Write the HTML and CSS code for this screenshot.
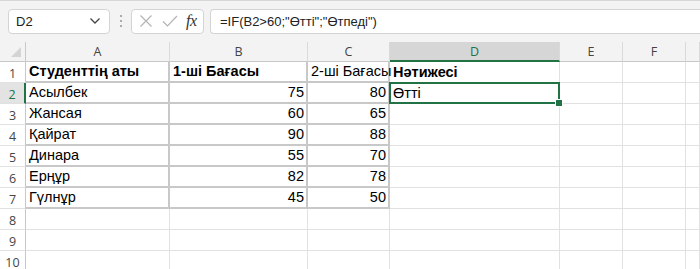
FILE: index.html
```html
<!DOCTYPE html>
<html lang="kk">
<head>
    <meta charset="UTF-8">
    <meta name="viewport" content="width=device-width, initial-scale=1.0">
    <title>Нәтижесі</title>
    <link rel="stylesheet" href="styles.css">
</head>
<body>

<div class="toolbar">
    <div class="namebox">
        <span>D2</span>
        <svg class="chevron" width="12" height="8" viewBox="0 0 12 8"><polyline points="1.5,1.5 6,6 10.5,1.5" fill="none" stroke="#444" stroke-width="1.3"/></svg>
    </div>
    <svg class="dots" width="4" height="14" viewBox="0 0 4 14"><circle cx="2" cy="2" r="1.1" fill="#9a9a9a"/><circle cx="2" cy="7" r="1.1" fill="#9a9a9a"/><circle cx="2" cy="12" r="1.1" fill="#9a9a9a"/></svg>
    <div class="fxbox">
        <svg width="14" height="14" viewBox="0 0 14 14"><path d="M1.5 1.5 L12.5 12.5 M12.5 1.5 L1.5 12.5" stroke="#b4b4b4" stroke-width="1.2" fill="none"/></svg>
        <svg width="16" height="14" viewBox="0 0 16 14"><polyline points="1,7.5 5.5,12 15,2" stroke="#b4b4b4" stroke-width="1.2" fill="none"/></svg>
        <span class="fx">fx</span>
    </div>
    <div class="formula">=IF(B2&gt;60;"Өтті";"Өтпеді")</div>
</div>

<div class="sheet">
    <div class="corner"><svg width="10" height="10" viewBox="0 0 10 10"><polygon points="10,0 10,10 0,10" fill="#d4d4d4"/></svg></div>
    <div class="colhead">A</div>
    <div class="colhead">B</div>
    <div class="colhead">C</div>
    <div class="colhead active">D</div>
    <div class="colhead">E</div>
    <div class="colhead">F</div>
    <div class="colhead"></div>

    <div class="rowhead">1</div>
    <div class="cell b bold">Студенттің аты</div>
    <div class="cell b bold">1-ші Бағасы</div>
    <div class="cell b">2-ші Бағасы</div>
    <div class="cell bold">Нәтижесі</div>
    <div class="cell"></div><div class="cell"></div><div class="cell"></div>

    <div class="rowhead active">2</div>
    <div class="cell b">Асылбек</div>
    <div class="cell b num">75</div>
    <div class="cell b num">80</div>
    <div class="cell selected">Өтті</div>
    <div class="cell"></div><div class="cell"></div><div class="cell"></div>

    <div class="rowhead">3</div>
    <div class="cell b">Жансая</div>
    <div class="cell b num">60</div>
    <div class="cell b num">65</div>
    <div class="cell"></div><div class="cell"></div><div class="cell"></div><div class="cell"></div>

    <div class="rowhead">4</div>
    <div class="cell b">Қайрат</div>
    <div class="cell b num">90</div>
    <div class="cell b num">88</div>
    <div class="cell"></div><div class="cell"></div><div class="cell"></div><div class="cell"></div>

    <div class="rowhead">5</div>
    <div class="cell b">Динара</div>
    <div class="cell b num">55</div>
    <div class="cell b num">70</div>
    <div class="cell"></div><div class="cell"></div><div class="cell"></div><div class="cell"></div>

    <div class="rowhead">6</div>
    <div class="cell b">Ерңұр</div>
    <div class="cell b num">82</div>
    <div class="cell b num">78</div>
    <div class="cell"></div><div class="cell"></div><div class="cell"></div><div class="cell"></div>

    <div class="rowhead">7</div>
    <div class="cell b">Гүлнұр</div>
    <div class="cell b num">45</div>
    <div class="cell b num">50</div>
    <div class="cell"></div><div class="cell"></div><div class="cell"></div><div class="cell"></div>

    <div class="rowhead">8</div>
    <div class="cell"></div><div class="cell"></div><div class="cell"></div><div class="cell"></div><div class="cell"></div><div class="cell"></div><div class="cell"></div>

    <div class="rowhead">9</div>
    <div class="cell"></div><div class="cell"></div><div class="cell"></div><div class="cell"></div><div class="cell"></div><div class="cell"></div><div class="cell"></div>

    <div class="rowhead">10</div>
    <div class="cell"></div><div class="cell"></div><div class="cell"></div><div class="cell"></div><div class="cell"></div><div class="cell"></div><div class="cell"></div>
</div>

</body>
</html>
```

FILE: styles.css
```css
body {
    margin: 0;
    background: #fff;
    font-family: "Liberation Sans", Arial, sans-serif;
    overflow: hidden;
}

.toolbar {
    display: flex;
    align-items: center;
    height: 42px;
    box-sizing: border-box;
    padding: 0 0 1px 8px;
    background: #f3f3f3;
    border-top: 1px solid #d6d6d6;
}

.namebox {
    display: flex;
    align-items: center;
    justify-content: space-between;
    width: 102px;
    height: 25px;
    box-sizing: border-box;
    padding: 0 7px 0 7px;
    background: #fff;
    border: 1px solid #d4d4d4;
    border-radius: 4px;
    font-size: 13px;
    color: #222;
}

.chevron {
    margin-right: 1px;
}

.dots {
    margin: 0 8px 0 9px;
}

.fxbox {
    display: flex;
    align-items: center;
    gap: 9px;
    width: 73px;
    height: 25px;
    box-sizing: border-box;
    padding: 0 0 0 7px;
    background: #fff;
    border: 1px solid #d4d4d4;
    border-radius: 4px;
}

.fx {
    font-family: "Liberation Serif", "Times New Roman", serif;
    font-style: italic;
    font-size: 16px;
    color: #333;
    letter-spacing: -0.5px;
    margin-left: -1px;
}

.formula {
    flex: 1;
    height: 25px;
    box-sizing: border-box;
    margin-left: 6px;
    padding: 4px 0 0 9px;
    background: #fff;
    border: 1px solid #d4d4d4;
    border-right: none;
    border-radius: 4px 0 0 4px;
    font-size: 13px;
    color: #222;
}

.sheet {
    display: grid;
    grid-template-columns: 26px 144px 138px 82px 170px 63px 63px 1fr;
    grid-template-rows: 20px repeat(10, 21px);
    font-size: 14.5px;
    color: #000;
}

.corner {
    display: flex;
    align-items: flex-end;
    justify-content: flex-end;
    padding: 0 4px 4px 0;
    background: #f3f3f3;
    border-right: 1px solid #c8c8c8;
    border-bottom: 1px solid #c8c8c8;
}

.colhead {
    display: flex;
    align-items: center;
    justify-content: center;
    box-sizing: border-box;
    background: #f3f3f3;
    border-right: 1px solid #dadada;
    border-bottom: 1px solid #c8c8c8;
    font-family: "Open Sans", sans-serif;
    font-size: 12.5px;
    color: #444;
}

.colhead.active {
    background: #d6d6d6;
    color: #217346;
    border-bottom: 2px solid #217346;
}

.rowhead {
    display: flex;
    align-items: center;
    justify-content: center;
    box-sizing: border-box;
    padding-top: 2px;
    background: #fff;
    border-right: 1px solid #c8c8c8;
    border-bottom: 1px solid #e1e1e1;
    font-family: "Open Sans", sans-serif;
    font-size: 12.5px;
    color: #444;
}

.rowhead.active {
    background: #e3e3e3;
    color: #217346;
    border-right: 2px solid #217346;
}

.cell {
    position: relative;
    display: flex;
    align-items: flex-end;
    box-sizing: border-box;
    padding: 0 3px 1px 3px;
    border-right: 1px solid #e1e1e1;
    border-bottom: 1px solid #e1e1e1;
    white-space: nowrap;
    line-height: 17px;
}

.cell.b {
    border-right: 2px solid #c8c8c8;
    border-bottom: 2px solid #c8c8c8;
}

.bold {
    font-weight: bold;
}

.num {
    justify-content: flex-end;
    padding-right: 2px;
}

.selected::after {
    content: "";
    position: absolute;
    left: -1px;
    top: -1px;
    right: -1px;
    bottom: -1px;
    border: 2px solid #217346;
}

.selected::before {
    content: "";
    position: absolute;
    right: -4px;
    bottom: -4px;
    width: 6px;
    height: 6px;
    background: #217346;
    border: 1px solid #fff;
    z-index: 1;
}
```
